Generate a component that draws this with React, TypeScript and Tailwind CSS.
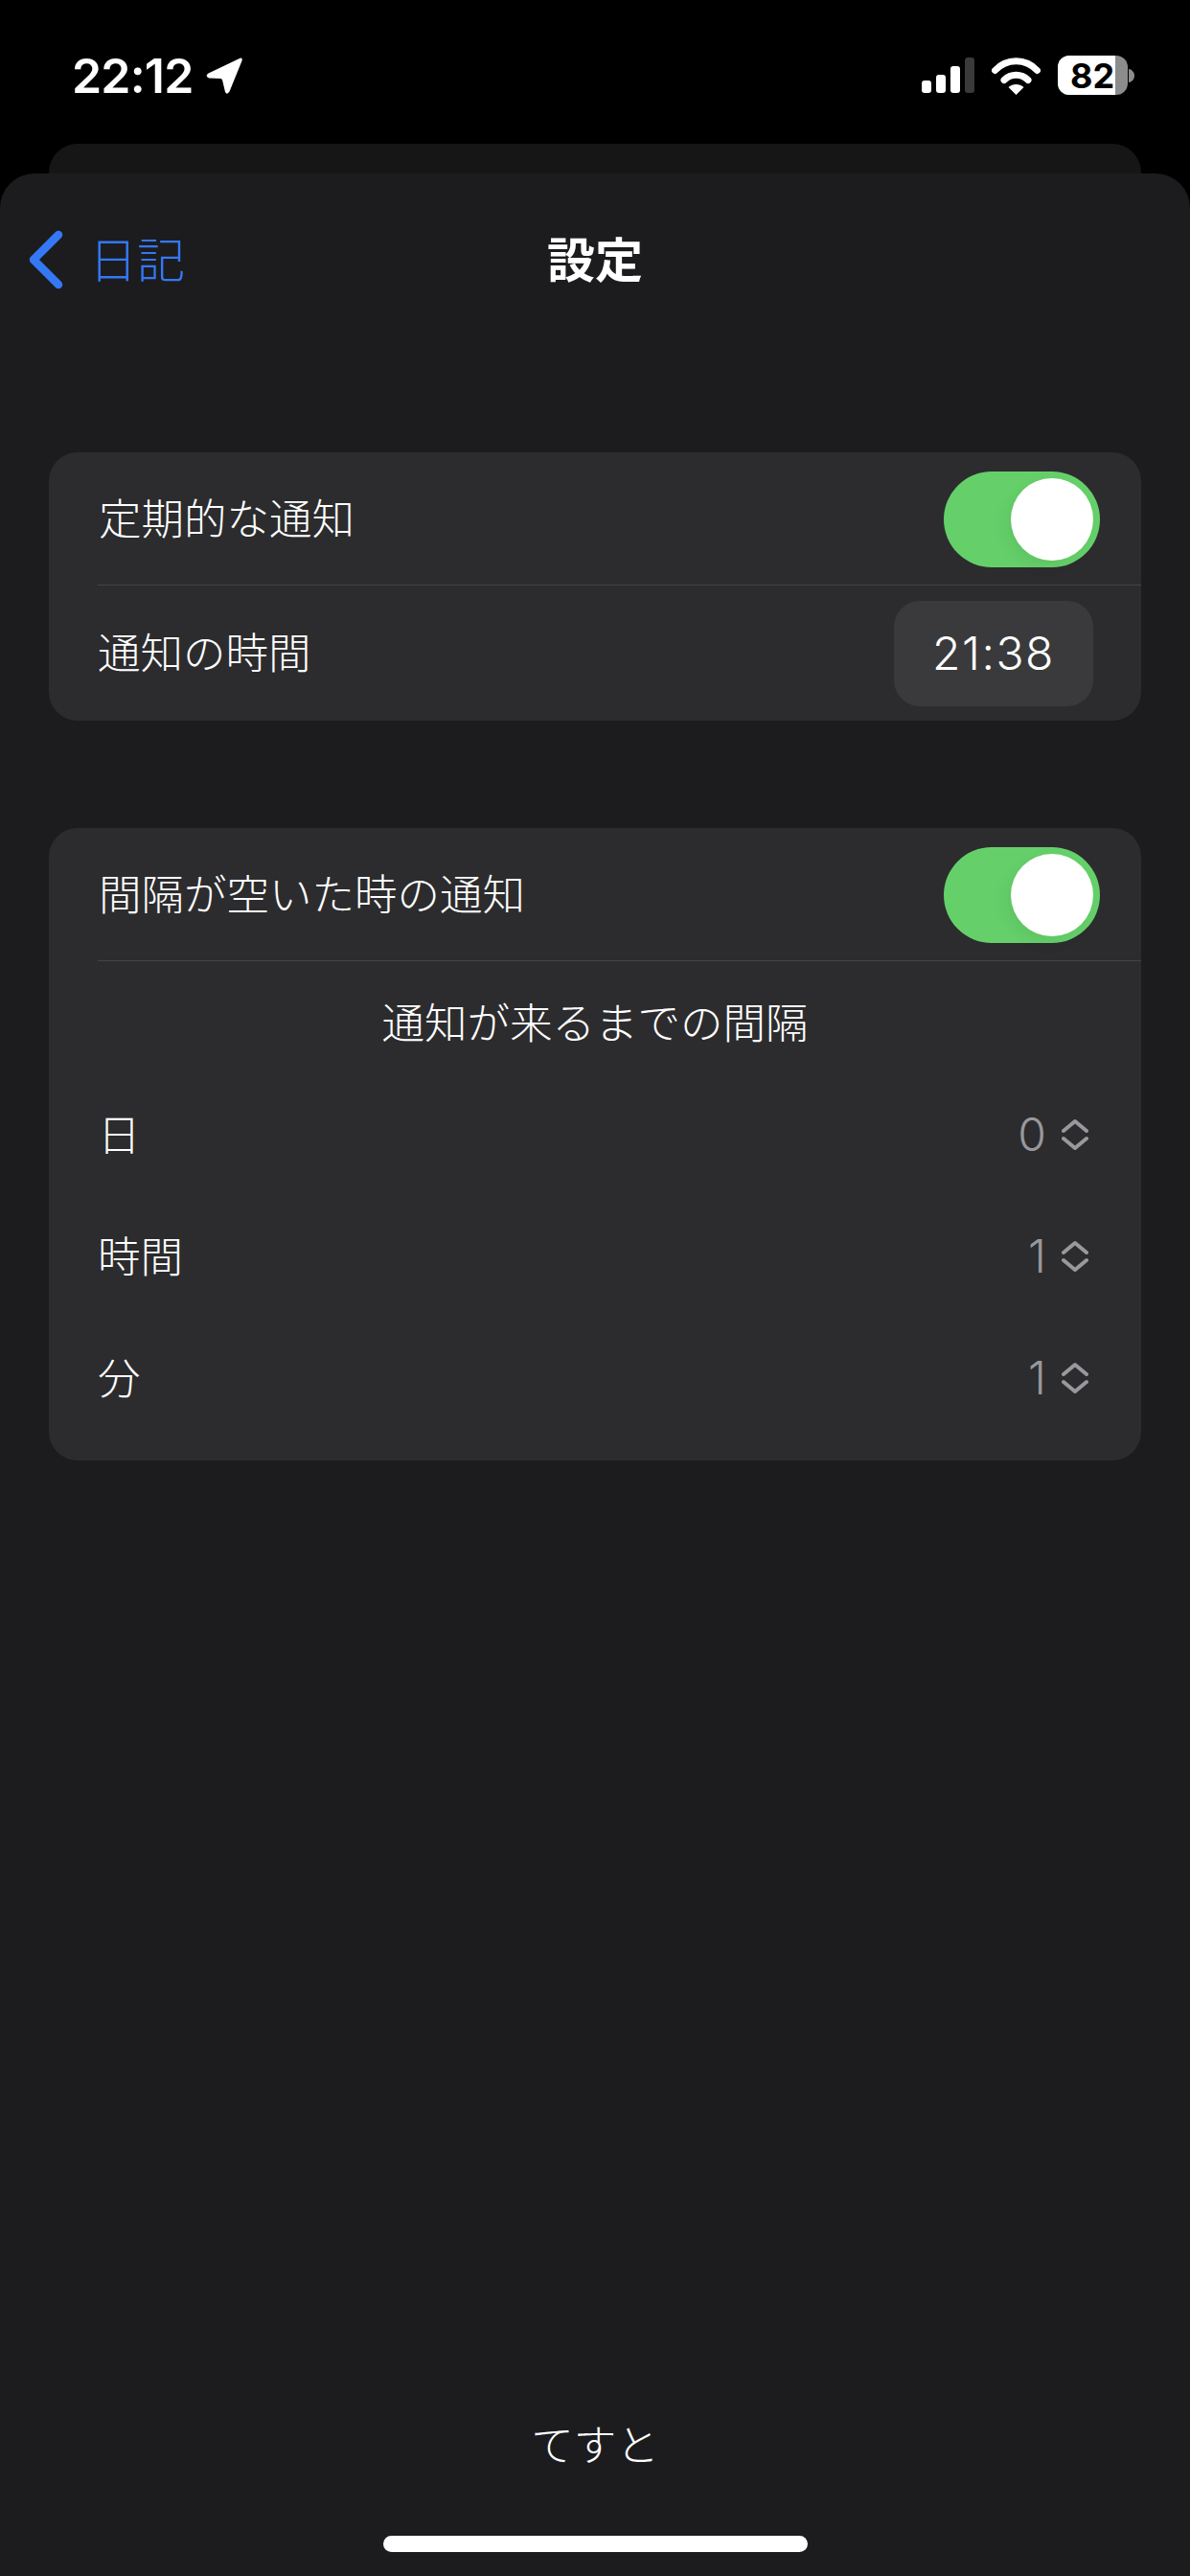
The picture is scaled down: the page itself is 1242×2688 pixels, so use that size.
function Toggle() {
  return (
    <div className="flex h-[100px] w-[163px] items-center justify-end rounded-full bg-[#65d06a] pr-[7px]">
      <div className="size-[86px] rounded-full bg-white shadow-[-6px_6px_16px_rgba(0,0,0,0.06)]" />
    </div>
  );
}

function UpDown() {
  return (
    <svg width="28" height="34" viewBox="0 0 28 34" fill="none" stroke="#98989d" strokeWidth="4" strokeLinecap="round" strokeLinejoin="round">
      <path d="M2 13 L14 3 L26 13" />
      <path d="M2 21 L14 31 L26 21" />
    </svg>
  );
}

function StepperRow({ label, value }: { label: string; value: string }) {
  return (
    <div className="flex h-[127px] items-center justify-between pl-[51px] pr-[55px]">
      <span className="mb-[3px] text-[44.5px] font-light leading-none">{label}</span>
      <div className="flex items-center gap-[16px]">
        <span className="font-['Inter',sans-serif] text-[48px] font-light leading-none text-[#98989d]">{value}</span>
        <UpDown />
      </div>
    </div>
  );
}

export default function App() {
  return (
    <div className="flex h-[2688px] w-[1242px] flex-col overflow-hidden bg-black font-['Noto_Sans_CJK_JP',sans-serif] text-white">
      {/* Status bar */}
      <div className="flex h-[150px] shrink-0 items-start justify-between pl-[75px] pr-[58px] pt-[58px]">
        <div className="flex items-center gap-[13px]">
          <span className="font-['Inter',sans-serif] text-[50px] font-semibold leading-[42px] tracking-[-0.8px]">22:12</span>
          <svg width="38" height="38" viewBox="0 0 38 38" fill="white">
            <path d="M35 1 L2.5 16.5 Q-1.5 19.5 3 21.5 L15 22 Q16.8 22.2 17.2 24 L20 36 Q22 39.5 24.5 35.5 L37.5 3.5 Q38.5 -0.5 35 1Z" />
          </svg>
        </div>
        <div className="flex items-center">
          <div className="flex h-[37px] items-end gap-[5px]">
            <div className="h-[13px] w-[10px] rounded-[3px] bg-white" />
            <div className="h-[19px] w-[10px] rounded-[3px] bg-white" />
            <div className="h-[28px] w-[10px] rounded-[3px] bg-white" />
            <div className="h-[37px] w-[10px] rounded-[3px] bg-[#3a3a3a]" />
          </div>
          <svg className="ml-[18px]" width="51" height="40" viewBox="0 0 51 40" fill="none" stroke="white" strokeWidth="7" strokeLinecap="round">
            <path d="M3.5 14.5 C15.5 1.5 35.5 1.5 47.5 14.5" />
            <path d="M13 24.5 C20 17.5 31 17.5 38 24.5" />
            <path d="M17.5 32 C22 28 29 28 33.5 32 L25.5 40 Z" fill="white" stroke="none" />
          </svg>
          <div className="relative ml-[18px] flex h-[41px] w-[73px] overflow-hidden rounded-[12px] bg-[#8c8c8c]">
            <div className="h-full w-[60px] bg-white" />
            <span className="absolute inset-y-0 left-[13px] flex items-center font-['Inter',sans-serif] text-[36px] font-bold leading-none text-black">82</span>
          </div>
          <svg className="ml-[1px]" width="6" height="14" viewBox="0 0 6 14" fill="#8c8c8c">
            <path d="M0 0 C3.5 0.5 6 3.5 6 7 C6 10.5 3.5 13.5 0 14Z" />
          </svg>
        </div>
      </div>

      {/* Card behind the sheet */}
      <div className="mx-[51px] h-[31px] shrink-0 rounded-t-[30px] bg-[#161617]" />

      {/* Sheet */}
      <div className="flex flex-1 flex-col rounded-t-[36px] bg-[#1c1c1e]">
        <div className="grid h-[180px] shrink-0 grid-cols-[1fr_auto_1fr] items-center">
          <div className="flex items-center gap-[27px] pl-[30px]">
            <svg width="36" height="62" viewBox="0 0 36 62" fill="none" stroke="#3478f6" strokeWidth="8.5" strokeLinecap="round" strokeLinejoin="round">
              <path d="M31 5 L5 31 L31 57" />
            </svg>
            <span className="mb-[6px] text-[50px] font-light leading-none text-[#3478f6]">日記</span>
          </div>
          <span className="mb-[6px] text-[50px] font-bold leading-none">設定</span>
          <div />
        </div>

        <div className="mx-[51px] mt-[111px] flex h-[280px] flex-col rounded-[30px] bg-[#2c2c2e]">
          <div className="flex h-[138px] shrink-0 items-center justify-between pl-[52px] pr-[43px] pt-[2px]">
            <span className="mb-[6px] text-[44.5px] font-light leading-none">定期的な通知</span>
            <Toggle />
          </div>
          <div className="ml-[51px] h-[1px] shrink-0 bg-[#444446]" />
          <div className="flex flex-1 items-center justify-between pl-[51px] pr-[50px]">
            <span className="mb-[4px] text-[44.5px] font-light leading-none">通知の時間</span>
            <div className="mb-[-1px] flex h-[110px] w-[208px] items-center justify-center rounded-[27px] bg-[#3a3a3c] font-['Inter',sans-serif] text-[48px] font-light leading-none tracking-[1.5px]">
              21:38
            </div>
          </div>
        </div>

        <div className="mx-[51px] mt-[112px] flex h-[660px] flex-col rounded-[30px] bg-[#2c2c2e]">
          <div className="flex h-[138px] shrink-0 items-center justify-between pl-[52px] pr-[43px] pt-[2px]">
            <span className="mb-[6px] text-[44.5px] font-light leading-none">間隔が空いた時の通知</span>
            <Toggle />
          </div>
          <div className="ml-[51px] h-[1px] shrink-0 bg-[#444446]" />
          <div className="flex h-[117px] shrink-0 items-center justify-center pt-[7px] text-[44.5px] font-light leading-none">通知が来るまでの間隔</div>
          <StepperRow label="日" value="0" />
          <StepperRow label="時間" value="1" />
          <StepperRow label="分" value="1" />
        </div>

        <div className="flex flex-1 flex-col items-center justify-end pb-[25px]">
          <span className="text-[44.5px] font-light leading-none">てすと</span>
          <div className="mt-[75px] h-[17px] w-[443px] rounded-full bg-white" />
        </div>
      </div>
    </div>
  );
}
